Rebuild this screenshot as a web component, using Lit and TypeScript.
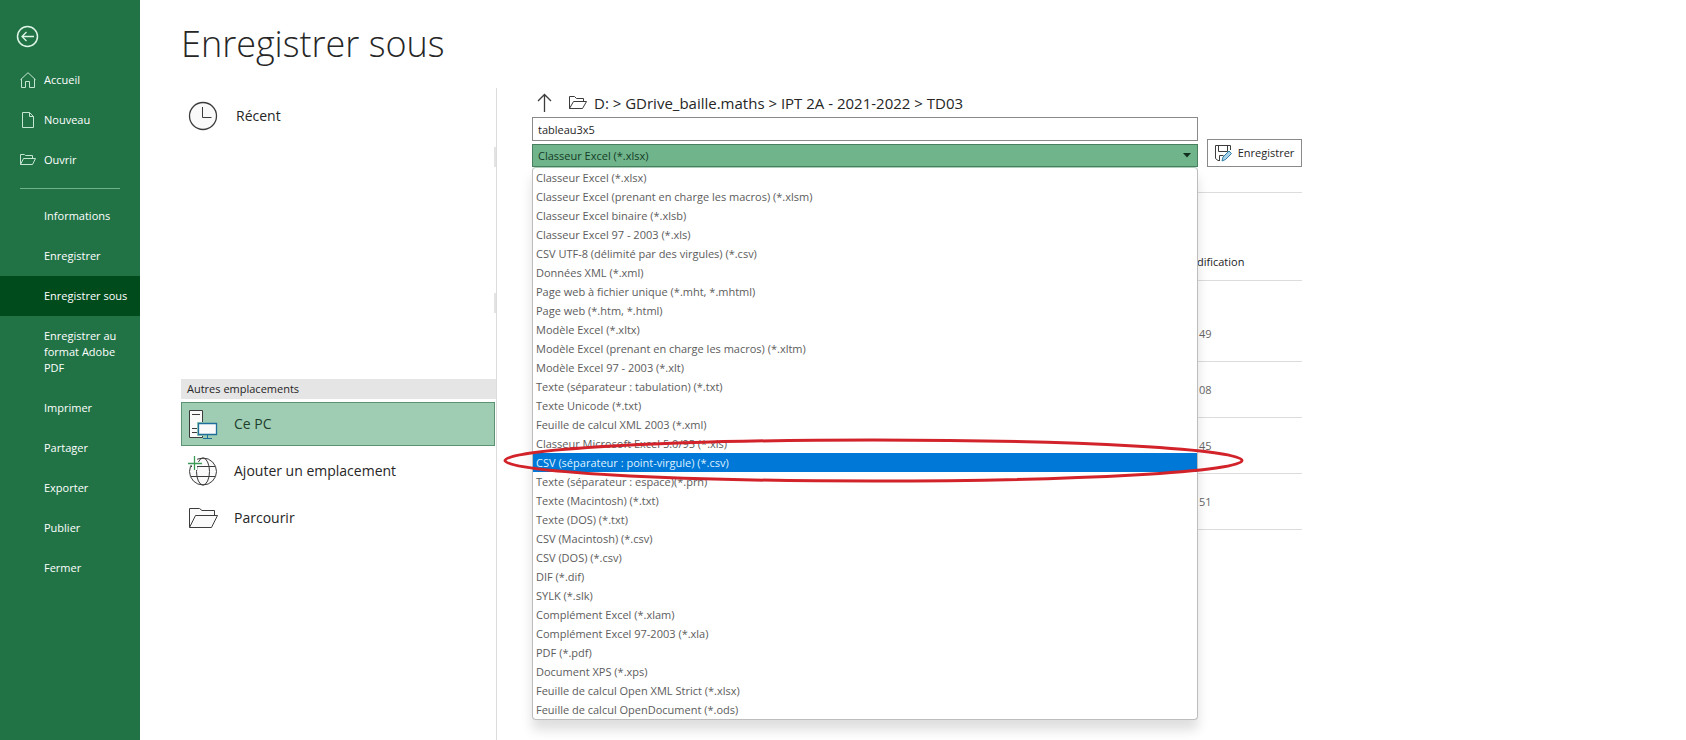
import { LitElement, html, css, svg, nothing } from "lit";
import { customElement, state } from "lit/decorators.js";
import { classMap } from "lit/directives/class-map.js";

const homeIcon = svg`<svg width="16" height="16" viewBox="0 0 16 16" aria-hidden="true"><path d="M.5 7.700 8 .7l7.500 7M1.500 7v8.500h4V9.500h4v6h5V7" /></svg>`;
const pageIcon = svg`<svg width="16" height="16" viewBox="0 0 16 16" aria-hidden="true"><path d="M2.500.5h7l4 4v11h-11zM9.500.5v4h4" /></svg>`;
const openIcon = svg`<svg width="16" height="16" viewBox="0 0 16 16" aria-hidden="true"><path d="M.5 12.500v-10h4l1 1h7v3M.5 12.500l3-6h12l-3 6z" /></svg>`;

interface NavItem {
  label: string;
  icon?: unknown;
}

const primaryNav: NavItem[] = [
  { label: "Accueil", icon: homeIcon },
  { label: "Nouveau", icon: pageIcon },
  { label: "Ouvrir", icon: openIcon },
];

const secondaryNav: NavItem[] = [
  "Informations",
  "Enregistrer",
  "Enregistrer sous",
  "Enregistrer au format Adobe PDF",
  "Imprimer",
  "Partager",
  "Exporter",
  "Publier",
  "Fermer",
].map((label) => ({ label }));

const formats = [
  "Classeur Excel (*.xlsx)",
  "Classeur Excel (prenant en charge les macros) (*.xlsm)",
  "Classeur Excel binaire (*.xlsb)",
  "Classeur Excel 97 - 2003 (*.xls)",
  "CSV UTF-8 (délimité par des virgules) (*.csv)",
  "Données XML (*.xml)",
  "Page web à fichier unique (*.mht, *.mhtml)",
  "Page web (*.htm, *.html)",
  "Modèle Excel (*.xltx)",
  "Modèle Excel (prenant en charge les macros) (*.xltm)",
  "Modèle Excel 97 - 2003 (*.xlt)",
  "Texte (séparateur : tabulation) (*.txt)",
  "Texte Unicode (*.txt)",
  "Feuille de calcul XML 2003 (*.xml)",
  "Classeur Microsoft Excel 5.0/95 (*.xls)",
  "CSV (séparateur : point-virgule) (*.csv)",
  "Texte (séparateur : espace)(*.prn)",
  "Texte (Macintosh) (*.txt)",
  "Texte (DOS) (*.txt)",
  "CSV (Macintosh) (*.csv)",
  "CSV (DOS) (*.csv)",
  "DIF (*.dif)",
  "SYLK (*.slk)",
  "Complément Excel (*.xlam)",
  "Complément Excel 97-2003 (*.xla)",
  "PDF (*.pdf)",
  "Document XPS (*.xps)",
  "Feuille de calcul Open XML Strict (*.xlsx)",
  "Feuille de calcul OpenDocument (*.ods)",
];

@customElement("backstage-nav")
class BackstageNav extends LitElement {
  @state() private current = "Enregistrer sous";

  static styles = css`
    :host {
      display: block;
      background: #217346;
      color: #fff;
    }
    .back {
      display: block;
      margin: 25px 0 0 16px;
      padding: 0;
      border: 0;
      background: none;
      width: 23px;
      height: 23px;
    }
    svg {
      display: block;
      fill: none;
      stroke: #c4e6d2;
    }
    .back svg {
      stroke: #dff5e8;
    }
    .group {
      display: flex;
      flex-direction: column;
    }
    .first {
      margin-top: 12px;
    }
    .item {
      display: grid;
      grid-template-columns: 16px 1fr;
      gap: 8px;
      align-items: center;
      padding: 12px 12px 12px 20px;
      border: 0;
      background: none;
      color: inherit;
      font: 11px/16px "Open Sans", sans-serif;
      text-align: left;
    }
    .label {
      grid-column: 2;
    }
    .item.current {
      background: #004b1c;
    }
    hr {
      margin: 8px 20px 7px;
      border: 0;
      border-top: 1px solid #6fb38b;
    }
  `;

  private item(entry: NavItem) {
    return html`<button
      class=${classMap({ item: true, current: entry.label === this.current })}
      @click=${() => (this.current = entry.label)}
    >
      ${entry.icon ?? nothing}<span class="label">${entry.label}</span>
    </button>`;
  }

  render() {
    return html`<nav>
      <button class="back" aria-label="Retour">
        <svg width="23" height="23" viewBox="0 0 23 23" aria-hidden="true">
          <circle cx="11.500" cy="11.500" r="10" stroke-width="1.500" />
          <path d="M18 11.500H6.500M10.500 7l-4.500 4.500 4.500 4.500" stroke-width="1.300" />
        </svg>
      </button>
      <div class="group first">${primaryNav.map((e) => this.item(e))}</div>
      <hr />
      <div class="group">${secondaryNav.map((e) => this.item(e))}</div>
    </nav>`;
  }
}

@customElement("place-list")
class PlaceList extends LitElement {
  static styles = css`
    :host {
      display: flex;
      flex-direction: column;
      border-right: 1px solid #dcdcdc;
      color: #262626;
    }
    .place {
      display: flex;
      align-items: center;
      gap: 16px;
      box-sizing: border-box;
      height: 44px;
      margin: 0 1px 3px 0;
      padding: 0 6px;
      border: 1px solid transparent;
      background: none;
      color: inherit;
      font: 14px/20px "Open Sans", sans-serif;
      text-align: left;
    }
    .recent {
      gap: 18px;
      margin: 6px 1px 9px 0;
    }
    .current {
      background: #9fcdb3;
      border-color: #5b9272;
      color: #1f3f2d;
    }
    .stub {
      align-self: flex-end;
      width: 2px;
      height: 20px;
      background: #e3e3e3;
      margin-bottom: 126px;
    }
    .stub.last {
      margin-bottom: 66px;
    }
    h2 {
      margin: 0 0 3px;
      padding: 0 6px;
      background: #e5e5e5;
      font: 500 11px/20px "Open Sans", sans-serif;
    }
    svg {
      flex: none;
      fill: none;
      stroke: #3c3c3c;
    }
    .pane {
      fill: #fafafa;
    }
    .screen {
      fill: #fafafa;
      stroke: #1e6f9c;
    }
    .plus {
      stroke: #3d9b57;
    }
  `;

  render() {
    return html`
      <button class="place recent">
        <svg width="30" height="30" viewBox="0 0 30 30" aria-hidden="true">
          <circle class="pane" cx="15" cy="15" r="13.500" stroke-width="1.300" />
          <path d="M14.500 6v10.500h9" />
        </svg>
        Récent
      </button>
      <div class="stub"></div>
      <div class="stub last"></div>
      <h2>Autres emplacements</h2>
      <button class="place current">
        <svg width="30" height="30" viewBox="0 0 30 30" aria-hidden="true">
          <path class="pane" d="M1.500 1.500h13v27h-13z" />
          <path d="M4 5.500h8M4 19.500h5M4 23.500h5" />
          <path d="M9 13h21v14H9z" fill="#9fcdb3" stroke="none" />
          <path class="screen" d="M10.500 14.500h18v11h-18z" stroke-width="1.300" />
          <path class="screen" d="M19.500 26v3M15 29.500h9" />
        </svg>
        Ce PC
      </button>
      <button class="place">
        <svg width="30" height="30" viewBox="0 0 30 30" aria-hidden="true">
          <circle class="pane" cx="15" cy="15.500" r="13.500" />
          <ellipse cx="15" cy="15.500" rx="6.500" ry="13.500" />
          <path d="M3 10.500h24M3 20.500h24" />
          <path d="M0 0h9v6h4v4H9v4H4V9H0z" fill="#fff" stroke="none" />
          <path class="plus" d="M6.500 0v14M0 7.500h14" stroke-width="1.300" />
        </svg>
        Ajouter un emplacement
      </button>
      <button class="place">
        <svg width="30" height="30" viewBox="0 0 30 30" aria-hidden="true">
          <path class="pane" d="M1.500 24.500v-19h10l2.500 2h12.500v5" />
          <path class="pane" d="M1.500 24.500l6-12h22l-6 12z" />
        </svg>
        Parcourir
      </button>
    `;
  }
}

@customElement("save-panel")
class SavePanel extends LitElement {
  @state() private highlighted = 15;

  static styles = css`
    :host {
      display: block;
      color: #262626;
      font: 11px/16px "Open Sans", sans-serif;
    }
    .path {
      display: flex;
      align-items: center;
      height: 29px;
      padding-left: 5px;
      font-size: 15px;
      line-height: 20px;
    }
    svg {
      display: block;
      flex: none;
      fill: none;
      stroke: #3c3c3c;
    }
    .up {
      margin-right: 15px;
      padding: 0;
      border: 0;
      background: none;
    }
    .folder {
      margin-right: 6px;
    }
    .form {
      display: grid;
      grid-template-columns: 1fr 95px;
      column-gap: 9px;
      align-items: end;
    }
    .fields {
      position: relative;
      display: flex;
      flex-direction: column;
      gap: 3px;
    }
    input,
    select {
      box-sizing: border-box;
      width: 100%;
      height: 24px;
      margin: 0;
      padding: 0 5px;
      border: 1px solid #8a8a8a;
      border-radius: 0;
      background: #fff;
      color: #262626;
      font: inherit;
      outline: 0;
    }
    .type {
      position: relative;
      display: block;
    }
    select {
      display: block;
      height: 23px;
      appearance: none;
      border-color: #477f5f;
      background: #70b48c;
      color: #123c25;
    }
    .caret {
      position: absolute;
      right: 7px;
      top: 9px;
      fill: #12301f;
      stroke: none;
    }
    .save {
      display: flex;
      align-items: center;
      justify-content: center;
      gap: 6px;
      height: 28px;
      padding: 0;
      border: 1px solid #8a8a8a;
      background: #fff;
      color: inherit;
      font: inherit;
    }
    .pen {
      fill: #a9d3ea;
      stroke: #2f7fa8;
    }
    .formats {
      position: absolute;
      z-index: 1;
      top: 100%;
      left: 0;
      right: 0;
      margin: 0;
      padding: 0;
      list-style: none;
      background: #fff;
      border: 1px solid #bdbdbd;
      border-top-color: #a9cdb8;
      border-radius: 4px;
      box-shadow: 0 10px 12px rgba(0, 0, 0, 0.13);
      color: #5c5c5c;
    }
    .format {
      padding: 0 3px;
      line-height: 19px;
      white-space: nowrap;
    }
    .format.on {
      position: relative;
      background: #0078d7;
      color: #dff1ff;
    }
    .ring {
      position: absolute;
      top: -13px;
      left: -28px;
      width: calc(100% + 73px);
      height: 41px;
      overflow: visible;
      stroke: #d2232a;
      stroke-width: 3px;
      pointer-events: none;
    }
    table {
      width: 100%;
      margin-top: 25px;
      border-collapse: collapse;
      table-layout: fixed;
      border-top: 1px solid #dcdcdc;
    }
    th,
    td {
      padding: 0;
      border-bottom: 1px solid #dcdcdc;
      text-align: left;
      font-weight: 400;
    }
    th {
      height: 37px;
      padding-top: 50px;
      color: #1c1c1c;
    }
    .date {
      width: 105px;
    }
    td {
      box-sizing: border-box;
      height: 56px;
      padding-left: 2px;
      color: #666;
    }
    .tall td {
      height: 81px;
      padding-top: 26px;
    }
  `;

  render() {
    return html`
      <div class="path">
        <button class="up" aria-label="Dossier parent">
          <svg width="16" height="20" viewBox="0 0 16 20" aria-hidden="true">
            <path d="M7.500 19V1.500M1 8l6.500-6.500L14 8" stroke-width="1.300" />
          </svg>
        </button>
        <svg class="folder" width="20" height="16" viewBox="0 0 20 16" aria-hidden="true">
          <path d="M1.500 13.500v-12h5l2 2h7v3M1.500 13.500l4-7h13l-4 7z" />
        </svg>
        <span>D: &gt; GDrive_baille.maths &gt; IPT 2A - 2021-2022 &gt; TD03</span>
      </div>
      <div class="form">
        <div class="fields">
          <input type="text" aria-label="Nom du fichier" value="tableau3x5" />
          <label class="type">
            <select aria-label="Type de fichier">
              ${formats.map((f) => html`<option>${f}</option>`)}
            </select>
            <svg class="caret" width="8" height="5" viewBox="0 0 8 5" aria-hidden="true">
              <path d="M0 0h8L4 4.500z" />
            </svg>
          </label>
          <ul class="formats" role="listbox" aria-label="Types de fichier">
            ${formats.map(
              (f, i) => html`<li
                role="option"
                aria-selected=${i === this.highlighted}
                class=${classMap({ format: true, on: i === this.highlighted })}
                @click=${() => (this.highlighted = i)}
              >
                ${f}${i === this.highlighted
                  ? html`<svg class="ring" viewBox="0 0 100 100" preserveAspectRatio="none" aria-hidden="true">
                      <ellipse cx="50" cy="50" rx="50" ry="50" vector-effect="non-scaling-stroke" />
                    </svg>`
                  : nothing}
              </li>`
            )}
          </ul>
        </div>
        <button class="save">
          <svg width="17" height="17" viewBox="0 0 17 17" aria-hidden="true">
            <path d="M5 15.500H3l-2.500-2V.5h15V5M3.500.5v6h9v-6M4.500 15.500v-5h4" />
            <path class="pen" d="M7 16l1-4 6-6 2.500 2.500-6 6z" />
          </svg>
          Enregistrer
        </button>
      </div>
      <table>
        <thead>
          <tr><th></th><th class="date">dification</th></tr>
        </thead>
        <tbody>
          ${["49", "08", "45", "51"].map(
            (m, i) => html`<tr class=${classMap({ tall: i === 0 })}><td></td><td>${m}</td></tr>`
          )}
        </tbody>
      </table>
    `;
  }
}

@customElement("app-root")
class AppRoot extends LitElement {
  static styles = css`
    :host {
      display: grid;
      grid-template-columns: 140px minmax(0, 1fr);
      min-height: 100vh;
      background: #fff;
      font-family: "Open Sans", sans-serif;
    }
    main {
      display: flex;
      flex-direction: column;
      padding-left: 41px;
    }
    h1 {
      margin: 16px 0;
      color: #262626;
      font: 300 36px/56px "Open Sans", sans-serif;
    }
    .columns {
      display: flex;
      flex: 1;
      gap: 35px;
    }
    place-list {
      flex: 0 0 315px;
    }
    save-panel {
      flex: 0 1 770px;
    }
  `;

  render() {
    return html`
      <backstage-nav></backstage-nav>
      <main>
        <h1>Enregistrer sous</h1>
        <div class="columns">
          <place-list></place-list>
          <save-panel></save-panel>
        </div>
      </main>
    `;
  }
}
